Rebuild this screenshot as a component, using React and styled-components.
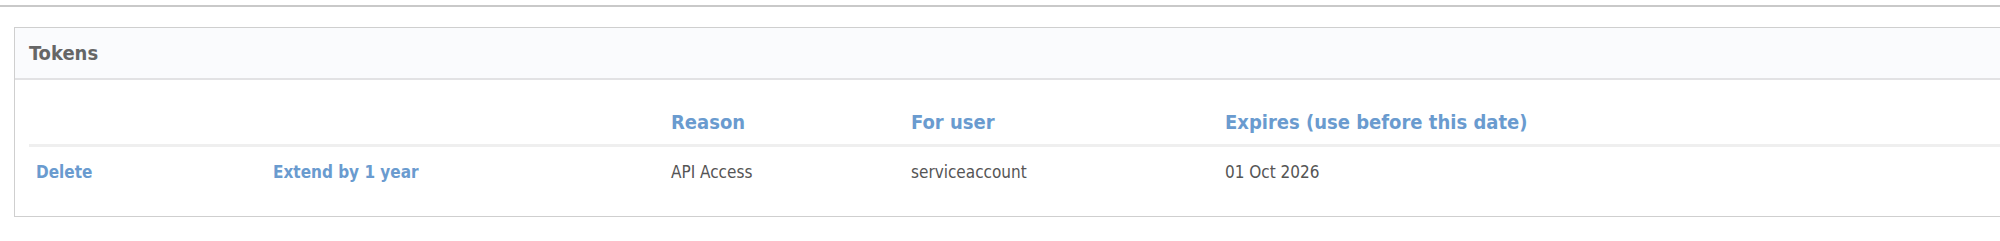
import React from "react";
import styled, { createGlobalStyle } from "styled-components";

const GlobalStyle = createGlobalStyle`
  html, body {
    margin: 0;
    padding: 0;
    background: #fff;
    overflow: hidden;
  }
  body {
    font-family: "DejaVu Sans Condensed", "DejaVu Sans", Tahoma, sans-serif;
    color: #555;
  }
`;

const TopRule = styled.div`
  margin-top: 5px;
  border-top: 2px solid #c9c9c9;
`;

const Panel = styled.section`
  margin: 20px -20px 0 14px;
  border: 1px solid #cfcfcf;
  background: #fff;
`;

const PanelHeader = styled.header`
  display: flex;
  align-items: center;
  height: 50px;
  padding: 0 14px;
  background: #fafbfd;
  border-bottom: 2px solid #e2e2e4;
  font-size: 20px;
  font-weight: bold;
  color: #666;
`;

const PanelBody = styled.div`
  padding: 20px 0 19px 14px;
`;

const Table = styled.table`
  width: 100%;
  border-collapse: collapse;
  table-layout: fixed;
  font-size: 17px;
  line-height: 20px;
`;

const Th = styled.th`
  text-align: left;
  vertical-align: bottom;
  padding: 10px 7px 10px;
  border-bottom: 3px solid #efefef;
  color: #6a9bcf;
  font-size: 20px;
  line-height: 24px;
  font-weight: bold;
  white-space: nowrap;
`;

const Td = styled.td`
  padding: 15px 7px;
  color: ${(p) => (p.$link ? "#6a9bcf" : "#555")};
  font-weight: ${(p) => (p.$link ? "bold" : "normal")};
  white-space: nowrap;
`;

const ActionLink = styled.a`
  color: inherit;
  text-decoration: none;
  cursor: pointer;
`;

const columns = [
  { key: "delete", width: 237, label: "" },
  { key: "extend", width: 398, label: "" },
  { key: "reason", width: 240, label: "Reason" },
  { key: "user", width: 314, label: "For user" },
  { key: "expires", label: "Expires (use before this date)" },
];

const tokens = [
  { id: 1, reason: "API Access", user: "serviceaccount", expires: "01 Oct 2026" },
];

export default function App() {
  return (
    <>
      <GlobalStyle />
      <TopRule />
      <Panel>
        <PanelHeader>Tokens</PanelHeader>
        <PanelBody>
          <Table>
            <colgroup>
              {columns.map((c) => (
                <col key={c.key} style={c.width ? { width: c.width } : undefined} />
              ))}
            </colgroup>
            <thead>
              <tr>
                {columns.map((c) => (
                  <Th key={c.key}>{c.label}</Th>
                ))}
              </tr>
            </thead>
            <tbody>
              {tokens.map((t) => (
                <tr key={t.id}>
                  <Td $link>
                    <ActionLink>Delete</ActionLink>
                  </Td>
                  <Td $link>
                    <ActionLink>Extend by 1 year</ActionLink>
                  </Td>
                  <Td>{t.reason}</Td>
                  <Td>{t.user}</Td>
                  <Td>{t.expires}</Td>
                </tr>
              ))}
            </tbody>
          </Table>
        </PanelBody>
      </Panel>
    </>
  );
}
